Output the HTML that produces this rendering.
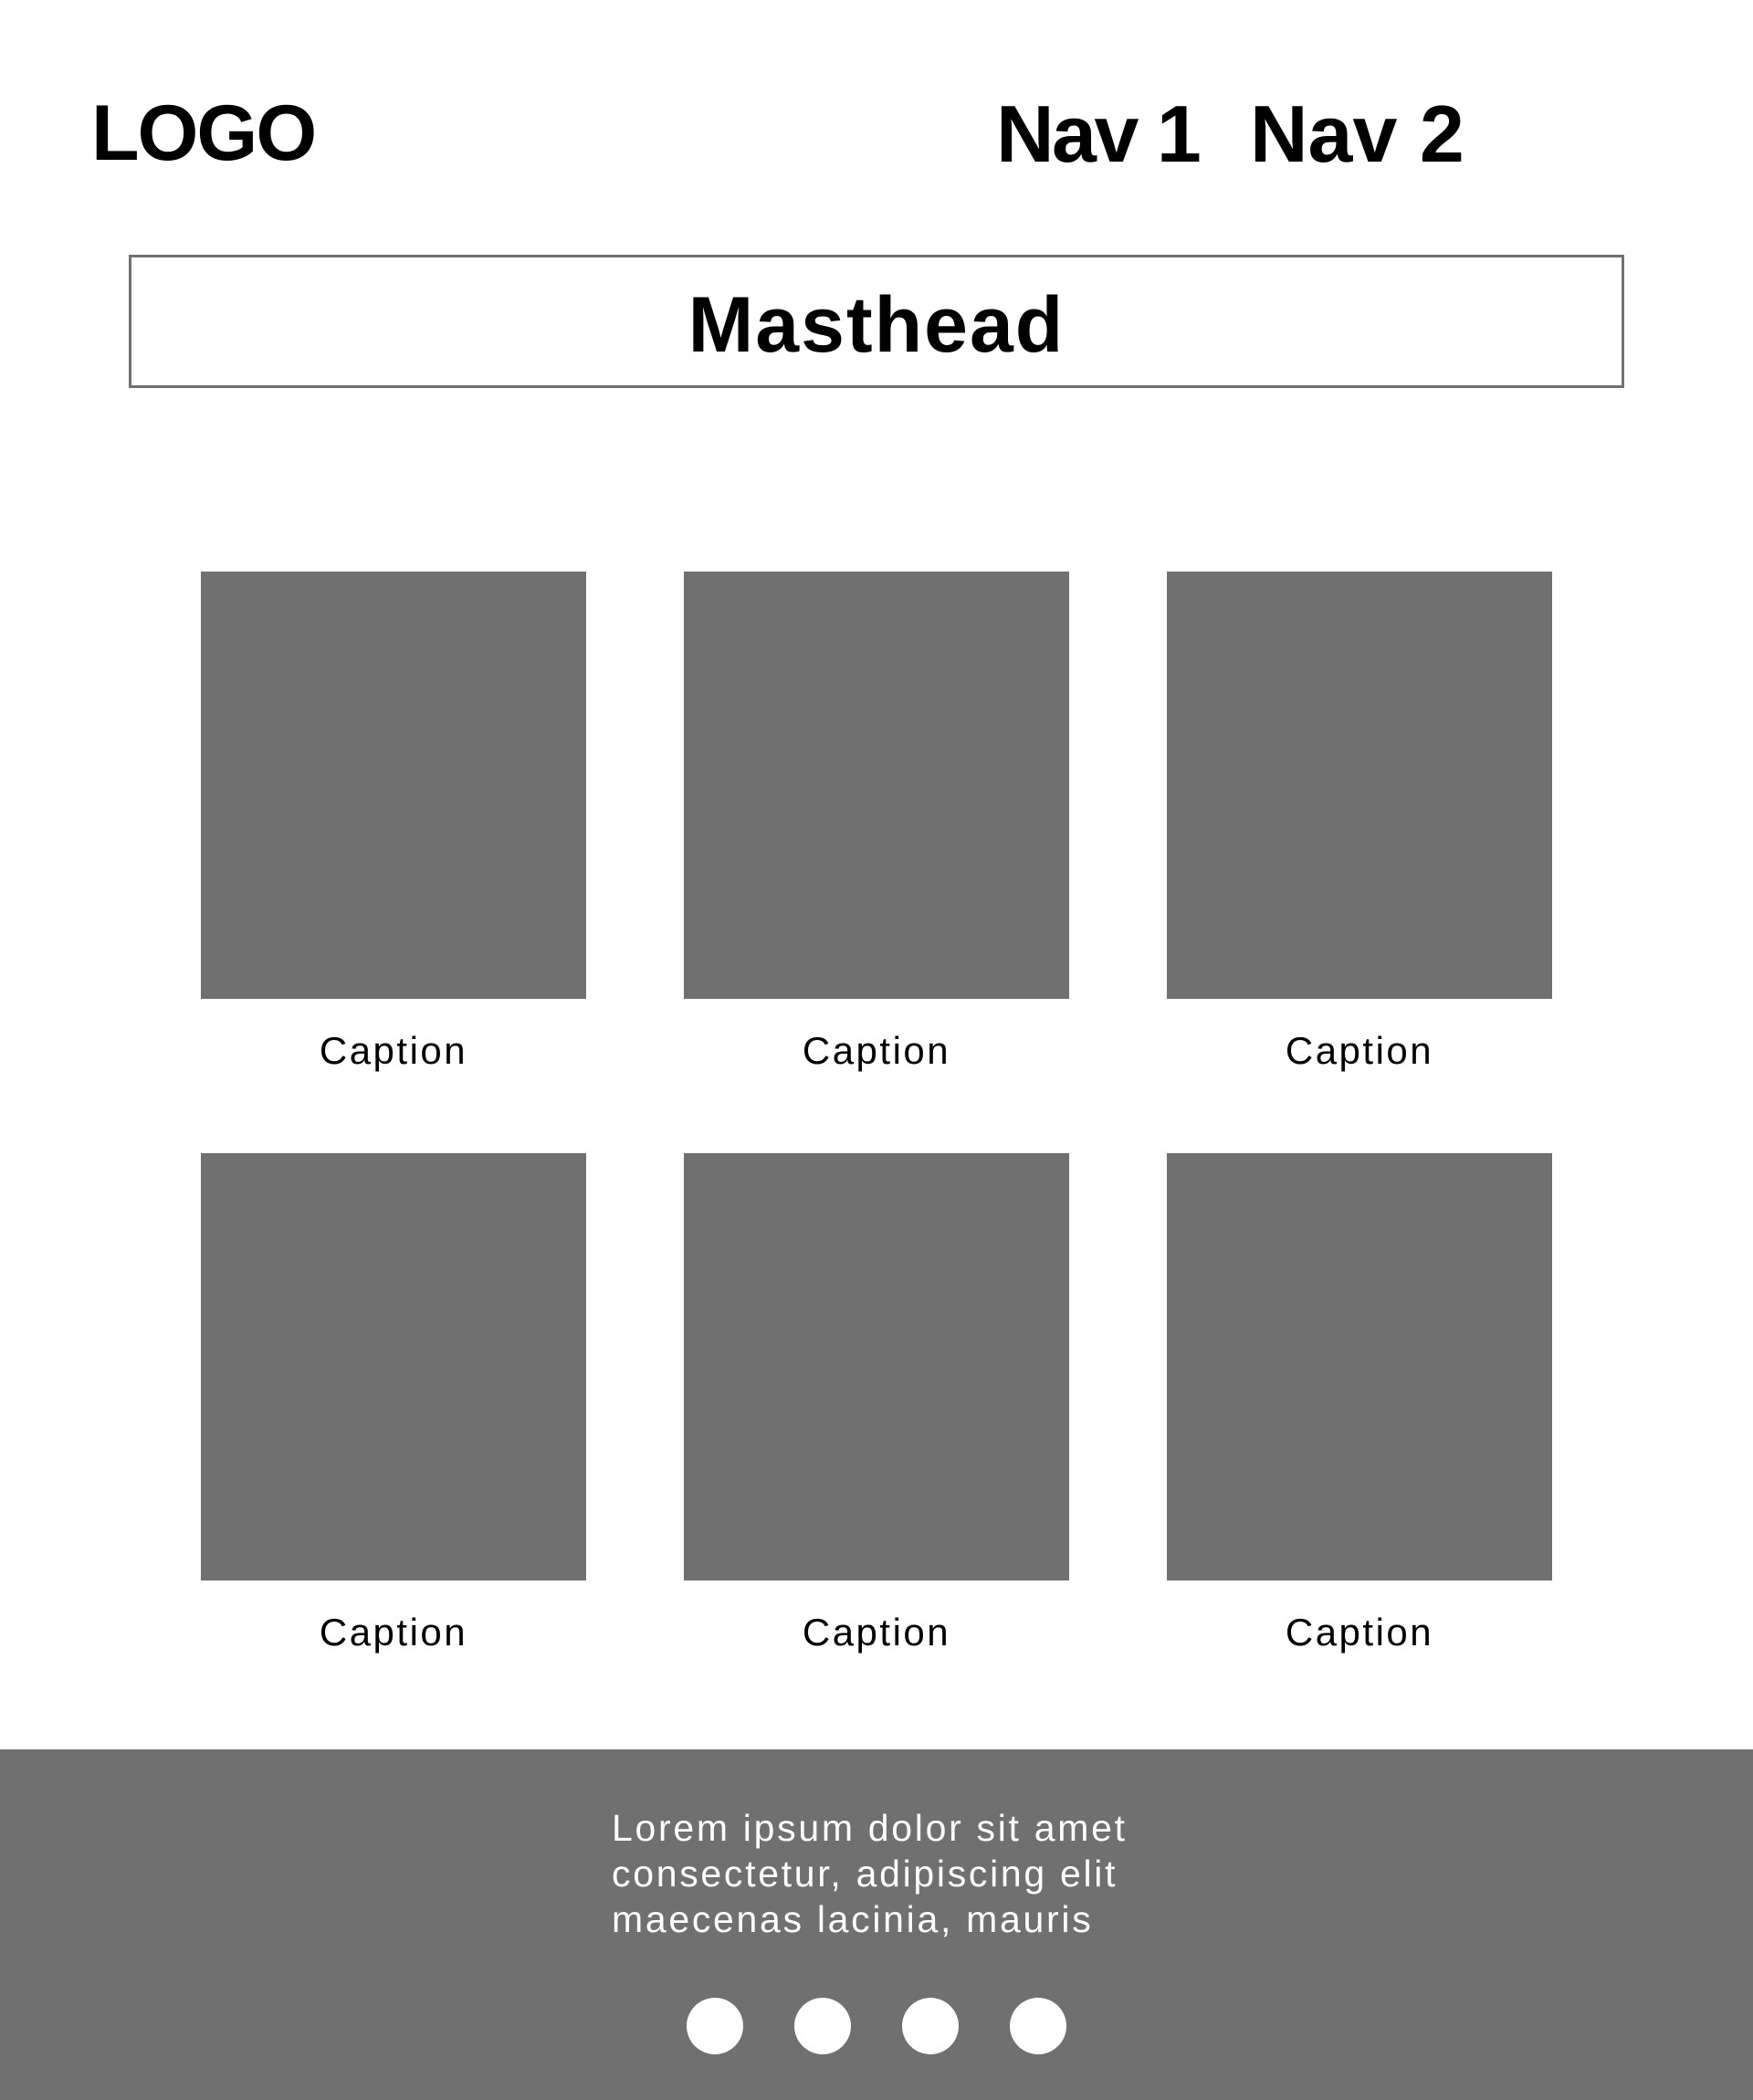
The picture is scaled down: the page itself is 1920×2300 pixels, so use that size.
<!DOCTYPE html>
<html><head><meta charset="utf-8"><style>
body{margin:0;width:1920px;height:2300px;position:relative;background:#fff;font-family:"Liberation Sans",sans-serif;overflow:hidden}
.a{position:absolute}
.b{font-weight:bold;color:#000;white-space:nowrap;line-height:1}
.img{position:absolute;background:#707070;width:422px;height:468px}
.cap{position:absolute;width:422px;text-align:center;font-size:42px;letter-spacing:2.5px;color:#000;line-height:1}
.dot{position:absolute;width:62px;height:62px;border-radius:50%;background:#fff;top:2188px}
</style></head><body>
<div class="a b" style="left:100px;top:103px;font-size:86px;letter-spacing:-2px">LOGO</div>
<div class="a b" style="left:1091px;top:103px;font-size:88px;letter-spacing:-2.5px">Nav 1</div>
<div class="a b" style="left:1369px;top:103px;font-size:88px;letter-spacing:0px">Nav 2</div>
<div class="a" style="left:141px;top:279px;width:1632px;height:140px;border:3px solid #707070"></div>
<div class="a b" style="left:141px;top:313px;width:1638px;text-align:center;font-size:86px;letter-spacing:2px">Masthead</div>
<div class="img" style="left:220px;top:626px"></div>
<div class="img" style="left:749px;top:626px"></div>
<div class="img" style="left:1278px;top:626px"></div>
<div class="img" style="left:220px;top:1263px"></div>
<div class="img" style="left:749px;top:1263px"></div>
<div class="img" style="left:1278px;top:1263px"></div>
<div class="cap" style="left:220px;top:1130px">Caption</div>
<div class="cap" style="left:749px;top:1130px">Caption</div>
<div class="cap" style="left:1278px;top:1130px">Caption</div>
<div class="cap" style="left:220px;top:1767px">Caption</div>
<div class="cap" style="left:749px;top:1767px">Caption</div>
<div class="cap" style="left:1278px;top:1767px">Caption</div>
<div class="a" style="left:0;top:1916px;width:1920px;height:384px;background:#707070"></div>
<div class="a" style="left:670px;top:1977px;font-size:41px;line-height:50px;color:#fff;letter-spacing:2.7px">Lorem ipsum dolor sit amet<br>consectetur, adipiscing elit<br>maecenas lacinia, mauris</div>
<div class="dot" style="left:752px"></div>
<div class="dot" style="left:870px"></div>
<div class="dot" style="left:988px"></div>
<div class="dot" style="left:1106px"></div>
</body></html>
